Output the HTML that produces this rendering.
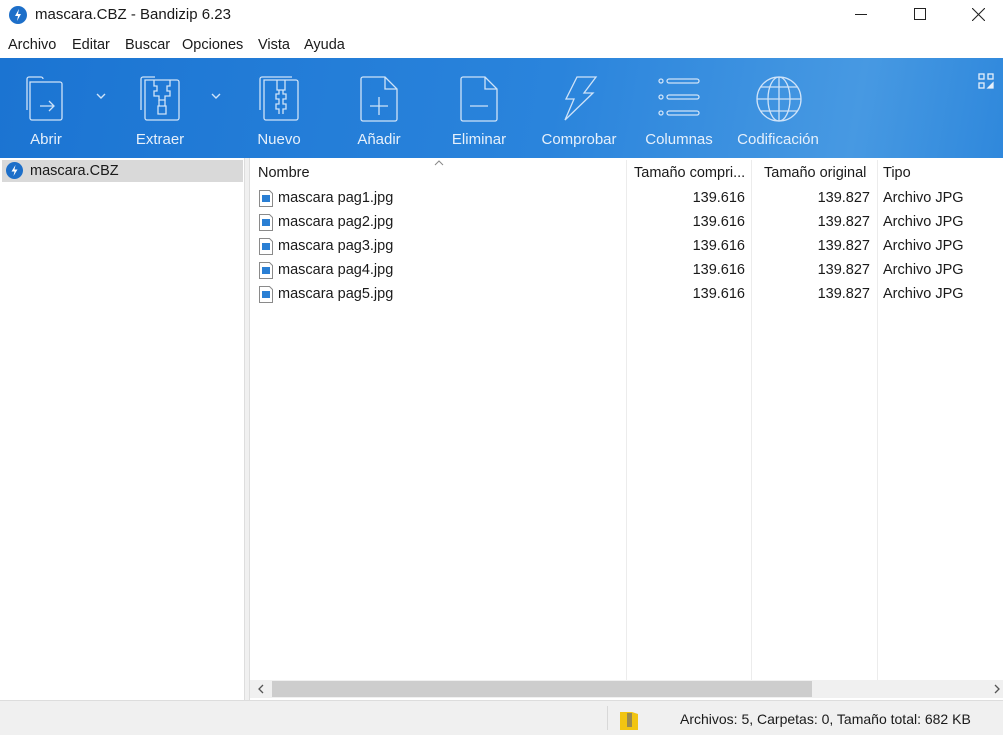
<!DOCTYPE html>
<html><head><meta charset="utf-8"><style>
*{margin:0;padding:0;box-sizing:border-box}
body{width:1003px;height:735px;overflow:hidden;background:#fff;font-family:"Liberation Sans",sans-serif;font-size:14.5px;color:#1a1a1a;position:relative}
.a{position:absolute;white-space:nowrap}
.tb{position:absolute;left:0;top:58px;width:1003px;height:100px;background:linear-gradient(100deg,#1b74d2 0%,#2a84dc 55%,#4799e2 85%,#2f88dc 100%)}
.lbl{position:absolute;top:131px;color:#e6f0fb;font-size:15px;transform:translateX(-50%)}
svg.ic{position:absolute;top:76px}
.row{position:absolute;left:258px;height:24px;line-height:24px;width:745px}
.r{position:absolute;text-align:right}
</style></head><body>
<!-- title -->
<svg class="a" style="left:9px;top:6px" width="18" height="18"><circle cx="9" cy="9" r="9" fill="#1d6fc9"/><path d="M10 3 L6 10 H9 L8 15 L12 8 H9 Z" fill="#fff"/></svg>
<div class="a" style="left:35px;top:6px;font-size:15px">mascara.CBZ - Bandizip 6.23</div>
<div class="a" style="left:855px;top:14px;width:12px;height:1px;background:#222"></div>
<div class="a" style="left:914px;top:8px;width:12px;height:12px;border:1px solid #222"></div>
<svg class="a" style="left:972px;top:8px" width="13" height="13"><path d="M0 0L13 13M13 0L0 13" stroke="#222" stroke-width="1.1"/></svg>
<!-- menu -->
<div class="a" style="left:8px;top:37px">Archivo</div>
<div class="a" style="left:72px;top:37px">Editar</div>
<div class="a" style="left:125px;top:37px">Buscar</div>
<div class="a" style="left:182px;top:37px">Opciones</div>
<div class="a" style="left:258px;top:37px">Vista</div>
<div class="a" style="left:304px;top:37px">Ayuda</div>
<!-- toolbar -->
<div class="tb"></div>
<g></g>
<svg class="ic" style="left:26px" width="42" height="46" fill="none" stroke="#cfe3f8" stroke-width="1.3"><path d="M1 34V3a2 2 0 0 1 2-2h12a2 2 0 0 1 2 2"/><path d="M4 6h30a2 2 0 0 1 2 2v34a2 2 0 0 1-2 2H6a2 2 0 0 1-2-2z"/><path d="M14 30h14M23 25l5 5-5 5"/></svg>
<svg class="a" style="left:96px;top:93px" width="10" height="7"><path d="M1 1l4 4 4-4" stroke="#cfe3f8" stroke-width="1.4" fill="none"/></svg>
<svg class="ic" style="left:140px" width="42" height="46" fill="none" stroke="#cfe3f8" stroke-width="1.3"><path d="M1 34V3a2 2 0 0 1 2-2h12"/><path d="M5 4h32a2 2 0 0 1 2 2v36a2 2 0 0 1-2 2H7a2 2 0 0 1-2-2z"/><path d="M14 4v6h3v5h-3v5h5v4h6v-4h5v-5h-3v-5h3V4"/><path d="M19 24v6h6v-6M18 30h8v8h-8z"/></svg>
<svg class="a" style="left:211px;top:93px" width="10" height="7"><path d="M1 1l4 4 4-4" stroke="#cfe3f8" stroke-width="1.4" fill="none"/></svg>
<svg class="ic" style="left:259px" width="42" height="46" fill="none" stroke="#cfe3f8" stroke-width="1.3"><path d="M1 34V3a2 2 0 0 1 2-2h30"/><path d="M5 4h32a2 2 0 0 1 2 2v36a2 2 0 0 1-2 2H7a2 2 0 0 1-2-2z"/><path d="M18 4v10h8V4M20 14v4h-3v5h3v5h-3v5h3v5M24 14v4h3v5h-3v5h3v5h-3v5"/></svg>
<svg class="ic" style="left:360px" width="40" height="46" fill="none" stroke="#cfe3f8" stroke-width="1.3"><path d="M3 1h22l12 12v30a2 2 0 0 1-2 2H3a2 2 0 0 1-2-2V3a2 2 0 0 1 2-2z"/><path d="M25 1v12h12M19 21v18M10 30h18"/></svg>
<svg class="ic" style="left:460px" width="40" height="46" fill="none" stroke="#cfe3f8" stroke-width="1.3"><path d="M3 1h22l12 12v30a2 2 0 0 1-2 2H3a2 2 0 0 1-2-2V3a2 2 0 0 1 2-2z"/><path d="M25 1v12h12M10 30h18"/></svg>
<svg class="ic" style="left:562px" width="36" height="46" fill="none" stroke="#cfe3f8" stroke-width="1.3"><path d="M15 1h19L22 17h9L3 44l9-21H4z"/></svg>
<svg class="ic" style="left:657px" width="44" height="46" fill="none" stroke="#cfe3f8" stroke-width="1.3"><circle cx="4" cy="5" r="2"/><circle cx="4" cy="21" r="2"/><circle cx="4" cy="37" r="2"/><rect x="10" y="3" width="32" height="4" rx="2"/><rect x="10" y="19" width="32" height="4" rx="2"/><rect x="10" y="35" width="32" height="4" rx="2"/></svg>
<svg class="ic" style="left:756px" width="46" height="46" fill="none" stroke="#cfe3f8" stroke-width="1.3"><circle cx="23" cy="23" r="22"/><ellipse cx="23" cy="23" rx="11" ry="22"/><path d="M23 1v44M1 23h44M5 11h36M5 35h36"/></svg>
<svg class="a" style="left:978px;top:73px" width="16" height="16" fill="none" stroke="#e6f0fb" stroke-width="1.3"><rect x="1" y="1" width="5" height="5"/><rect x="10" y="1" width="5" height="5"/><rect x="1" y="10" width="5" height="5"/><path d="M15 10v5h-5z" fill="#e6f0fb"/></svg>
<div class="lbl" style="left:46px">Abrir</div>
<div class="lbl" style="left:160px">Extraer</div>
<div class="lbl" style="left:279px">Nuevo</div>
<div class="lbl" style="left:379px">Añadir</div>
<div class="lbl" style="left:479px">Eliminar</div>
<div class="lbl" style="left:579px">Comprobar</div>
<div class="lbl" style="left:679px">Columnas</div>
<div class="lbl" style="left:778px">Codificación</div>
<!-- left panel -->
<div class="a" style="left:2px;top:160px;width:241px;height:22px;background:#d9d9d9"></div>
<svg class="a" style="left:6px;top:162px" width="17" height="17"><circle cx="8.5" cy="8.5" r="8.5" fill="#1d6fc9"/><path d="M9.5 3 L5.5 9.5 H8.5 L7.5 14 L11.5 7.5 H8.5 Z" fill="#fff"/></svg>
<div class="a" style="left:30px;top:163px">mascara.CBZ</div>
<div class="a" style="left:244px;top:158px;width:6px;height:543px;background:#f0f0f0;border-left:1px solid #ddd;border-right:1px solid #ddd"></div>
<!-- header -->
<div class="a" style="left:258px;top:165px">Nombre</div>
<svg class="a" style="left:434px;top:160px" width="10" height="6"><path d="M1 5l4-4 4 4" stroke="#888" fill="none"/></svg>
<div class="a" style="left:634px;top:165px">Tamaño compri...</div>
<div class="a" style="left:764px;top:165px">Tamaño original</div>
<div class="a" style="left:883px;top:165px">Tipo</div>
<div class="a" style="left:626px;top:160px;width:1px;height:520px;background:#ececec"></div>
<div class="a" style="left:751px;top:160px;width:1px;height:520px;background:#ececec"></div>
<div class="a" style="left:877px;top:160px;width:1px;height:520px;background:#ececec"></div>
<!-- rows -->
<div id="rows"></div>
<div class="row" style="top:186px"><svg class="a" style="left:1px;top:4px" width="14" height="17"><path d="M.5 .5h10l3 3v13H.5z" fill="#fff" stroke="#8a8a8a"/><rect x="3" y="5" width="8" height="7" fill="#2a7fd4"/></svg><span class="a" style="left:20px">mascara pag1.jpg</span><span class="r" style="right:258px">139.616</span><span class="r" style="right:133px">139.827</span><span class="a" style="left:625px">Archivo JPG</span></div>
<div class="row" style="top:210px"><svg class="a" style="left:1px;top:4px" width="14" height="17"><path d="M.5 .5h10l3 3v13H.5z" fill="#fff" stroke="#8a8a8a"/><rect x="3" y="5" width="8" height="7" fill="#2a7fd4"/></svg><span class="a" style="left:20px">mascara pag2.jpg</span><span class="r" style="right:258px">139.616</span><span class="r" style="right:133px">139.827</span><span class="a" style="left:625px">Archivo JPG</span></div>
<div class="row" style="top:234px"><svg class="a" style="left:1px;top:4px" width="14" height="17"><path d="M.5 .5h10l3 3v13H.5z" fill="#fff" stroke="#8a8a8a"/><rect x="3" y="5" width="8" height="7" fill="#2a7fd4"/></svg><span class="a" style="left:20px">mascara pag3.jpg</span><span class="r" style="right:258px">139.616</span><span class="r" style="right:133px">139.827</span><span class="a" style="left:625px">Archivo JPG</span></div>
<div class="row" style="top:258px"><svg class="a" style="left:1px;top:4px" width="14" height="17"><path d="M.5 .5h10l3 3v13H.5z" fill="#fff" stroke="#8a8a8a"/><rect x="3" y="5" width="8" height="7" fill="#2a7fd4"/></svg><span class="a" style="left:20px">mascara pag4.jpg</span><span class="r" style="right:258px">139.616</span><span class="r" style="right:133px">139.827</span><span class="a" style="left:625px">Archivo JPG</span></div>
<div class="row" style="top:282px"><svg class="a" style="left:1px;top:4px" width="14" height="17"><path d="M.5 .5h10l3 3v13H.5z" fill="#fff" stroke="#8a8a8a"/><rect x="3" y="5" width="8" height="7" fill="#2a7fd4"/></svg><span class="a" style="left:20px">mascara pag5.jpg</span><span class="r" style="right:258px">139.616</span><span class="r" style="right:133px">139.827</span><span class="a" style="left:625px">Archivo JPG</span></div>
<!-- scrollbar -->
<div class="a" style="left:250px;top:680px;width:753px;height:18px;background:#f0f0f0"></div>
<div class="a" style="left:272px;top:681px;width:540px;height:16px;background:#cdcdcd"></div>
<svg class="a" style="left:257px;top:684px" width="8" height="10"><path d="M6 1L2 5l4 4" stroke="#555" fill="none" stroke-width="1.3"/></svg>
<svg class="a" style="left:993px;top:684px" width="8" height="10"><path d="M2 1l4 4-4 4" stroke="#555" fill="none" stroke-width="1.3"/></svg>
<!-- status -->
<div class="a" style="left:0;top:700px;width:1003px;height:35px;background:#f0f0f0;border-top:1px solid #ddd"></div>
<div class="a" style="left:607px;top:706px;width:1px;height:24px;background:#d8d8d8"></div>
<svg class="a" style="left:619px;top:709px" width="20" height="22"><path d="M1 3h12l6 2v16H1z" fill="#f2c511"/><rect x="8" y="4" width="5" height="14" fill="#9a8a50"/></svg>
<div class="a" style="left:680px;top:711px;font-size:14px">Archivos: 5, Carpetas: 0, Tamaño total: 682 KB</div>
</body></html>
